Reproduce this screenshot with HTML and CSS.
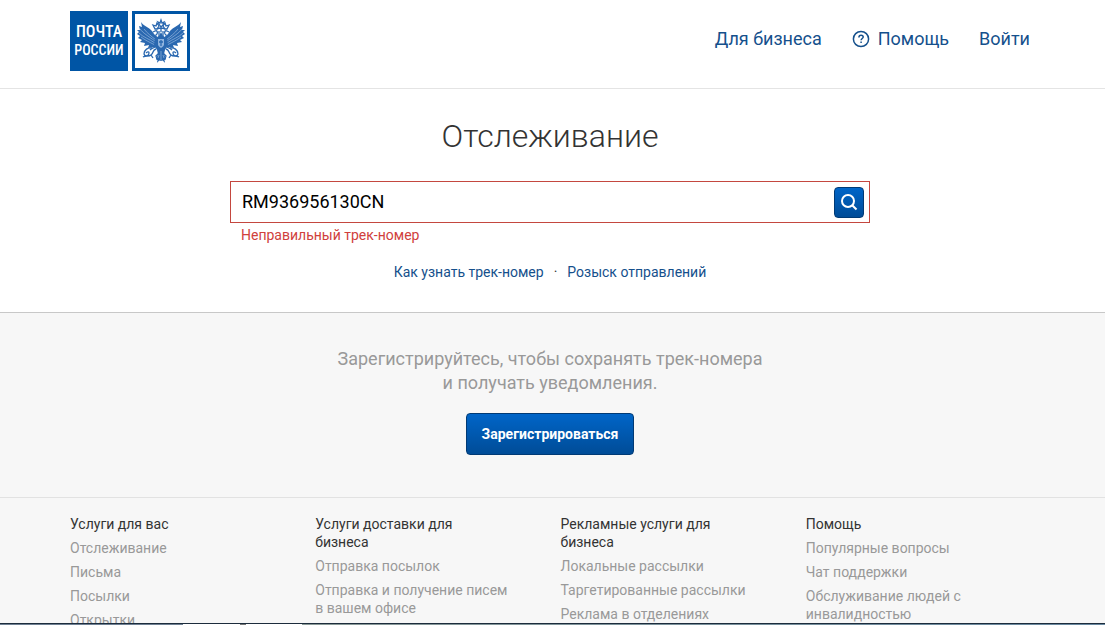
FILE: index.html
```
<!DOCTYPE html>
<html lang="ru">
<head>
<meta charset="utf-8">
<title>Отслеживание — Почта России</title>
<link rel="stylesheet" href="styles.css">
</head>
<body>
<header class="header">
  <a class="logo" href="#" aria-label="Почта России">
    <span class="logo-name"><span>ПОЧТА</span><span class="logo-second">РОССИИ</span></span>
    <span class="logo-emblem">
      <svg viewBox="0 0 52 54" width="52" height="54" aria-hidden="true">
        <defs>
          <g id="half">
            <path class="feather" d="M6 8 C8 12 14 13 17 17 C19 20 21 23 24 24 L24 33 L19 33 L13 34 L14 31 L9 32 L10 29 L5 28 L7 26 L3 24 L5 22 L2 20 L4 18 L2 16 L5 16 L4 12 L7 13Z"/>
            <path class="gap" d="M5 15 C8 19 13 22 20 27 M4 19 C8 23 14 25 20 29 M6 23 C10 26 14 28 20 31 M9 15 C12 19 16 22 21 26"/>
            <path class="line" d="M24 25 C20 23 20 21 22 20 C23 18 22 16 20 17 L18 18 M20 15 L18 11 L21 12 L22 9 L24 12 L22 15Z M24 17 L24 23"/>
            <path class="line" d="M23 32 C20 33 17 34 15 36 M17 34 C13 33 9 36 9 40 C10 43 14 42 14 39 C14 37 12 38 11 39 M21 35 C17 36 19 39 16 41 C14 43 11 41 8 43 M16 41 L18 44 M24 39 L21 42 L22 45 L24 43 L23 47 L26 44"/>
          </g>
        </defs>
        <use href="#half"/>
        <use href="#half" transform="translate(52 0) scale(-1 1)"/>
        <path class="body" d="M26 18 L28 22 L32 24 L33 31 L30 36 L29 40 L31 45 L26 47 L21 45 L23 40 L22 36 L19 31 L20 24 L24 22Z"/>
        <path class="shield" d="M23 25H29V31Q28 33 26 34Q24 33 23 31Z"/>
        <path class="line" d="M24 10 L23 8 L25 9 L26 6 L27 9 L29 8 L28 11 L26 13Z M26 13V18 M22 15Q26 13 30 15 M24 28L28 28 M26 26V32"/>
        <path class="gap" d="M26 37V46 M24 41L23 44 M28 41L29 44"/>
      </svg>
    </span>
  </a>
  <nav class="nav">
    <a href="#">Для бизнеса</a>
    <a class="help" href="#">
      <svg viewBox="0 0 18 18" width="18" height="18" aria-hidden="true">
        <circle cx="9" cy="9" r="7.6"/>
        <path d="M6.9 7.4C6.9 6 7.8 5.2 9.1 5.2C10.4 5.2 11.2 6 11.2 7C11.2 8.5 9.1 8.6 9.1 10.3M9.1 11.6V13"/>
      </svg>
      Помощь
    </a>
    <a href="#">Войти</a>
  </nav>
</header>

<main>
  <section class="tracking">
    <h1>Отслеживание</h1>
    <form class="search">
      <div class="field">
        <input id="track" type="text" value="RM936956130CN" aria-label="Трек-номер" aria-describedby="track-error">
        <button class="search-button" type="button" aria-label="Найти">
          <svg viewBox="0 0 18 18" width="18" height="18" aria-hidden="true">
            <circle cx="8" cy="8" r="6"/>
            <path d="M12.2 12.2L16.5 16.5"/>
          </svg>
        </button>
      </div>
      <p class="error" id="track-error">Неправильный трек-номер</p>
    </form>
    <p class="hints"><a href="#">Как узнать трек-номер</a><span>·</span><a href="#">Розыск отправлений</a></p>
  </section>

  <section class="register">
    <p>Зарегистрируйтесь, чтобы сохранять трек-номера<br>и получать уведомления.</p>
    <button class="register-button" type="button">Зарегистрироваться</button>
  </section>
</main>

<footer class="footer">
  <section>
    <h2>Услуги для вас</h2>
    <ul>
      <li><a href="#">Отслеживание</a></li>
      <li><a href="#">Письма</a></li>
      <li><a href="#">Посылки</a></li>
      <li><a href="#">Открытки</a></li>
    </ul>
  </section>
  <section>
    <h2>Услуги доставки для бизнеса</h2>
    <ul>
      <li><a href="#">Отправка посылок</a></li>
      <li><a href="#">Отправка и получение писем в вашем офисе</a></li>
    </ul>
  </section>
  <section>
    <h2>Рекламные услуги для бизнеса</h2>
    <ul>
      <li><a href="#">Локальные рассылки</a></li>
      <li><a href="#">Таргетированные рассылки</a></li>
      <li><a href="#">Реклама в отделениях</a></li>
    </ul>
  </section>
  <section>
    <h2>Помощь</h2>
    <ul>
      <li><a href="#">Популярные вопросы</a></li>
      <li><a href="#">Чат поддержки</a></li>
      <li><a href="#">Обслуживание людей с инвалидностью</a></li>
    </ul>
  </section>
</footer>
<div class="taskbar" aria-hidden="true"></div>
</body>
</html>
```
FILE: styles.css
```
* { box-sizing: border-box; }
body {
  height: 100vh;
  margin: 0;
  overflow: hidden;
  background: #fff;
  color: #333;
  font: 14px/18px Roboto, "Liberation Sans", sans-serif;
}
h1, h2, p, ul { margin: 0; padding: 0; font-weight: 400; }
ul { list-style: none; }
a { color: #15508c; text-decoration: none; }
button { font-family: inherit; padding: 0; cursor: pointer; }

.header {
  display: flex;
  justify-content: space-between;
  align-items: flex-start;
  padding: 11px 75px 17px 70px;
  border-bottom: 1px solid #e4e4e4;
}
.logo { display: flex; gap: 4px; }
.logo-name, .logo-emblem { width: 58px; height: 60px; }
.logo-name {
  display: flex;
  flex-direction: column;
  align-items: center;
  padding-top: 12px;
  background: #0055a5;
  color: #fff;
  font: 500 16px/18px "Roboto Condensed", "Liberation Sans Narrow", sans-serif;
}
.logo-second { font-size: 14px; }
.logo-emblem { border: 3px solid #0055a5; background: #fff; }
.logo-emblem svg { display: block; }
.feather, .body { fill: #2a68b0; }
.line { fill: none; stroke: #2a68b0; stroke-width: 1.3; }
.gap { fill: none; stroke: #a9c6e8; stroke-width: .6; }
.shield { fill: #8fb3dd; }

.nav {
  display: flex;
  gap: 30px;
  padding-top: 16px;
  font-size: 18px;
  line-height: 24px;
}
.help { display: flex; align-items: center; gap: 8px; }
.help svg { fill: none; stroke: #15508c; stroke-width: 1.5; }

.tracking { padding: 30px 75px 31px 70px; text-align: center; }
h1 { font-size: 32px; line-height: 34px; font-weight: 300; }
.search { max-width: 640px; margin: 28px auto 0; text-align: left; }
.field {
  display: flex;
  align-items: center;
  height: 42px;
  padding: 0 5px 0 11px;
  border: 1px solid #c4473f;
}
.field input {
  flex: 1;
  min-width: 0;
  padding: 0;
  border: 0;
  outline: 0;
  background: none;
  color: #000;
  font: 18px/24px Roboto, "Liberation Sans", sans-serif;
}
.search-button, .register-button {
  border: 1px solid #003a75;
  border-radius: 4px;
  background: linear-gradient(#0065c8, #004c97);
  color: #fff;
}
.search-button { display: grid; place-items: center; width: 30px; height: 31px; }
.search-button svg { fill: none; stroke: #fff; stroke-width: 2; }
.error { padding: 3px 11px 0; color: #d0403c; }
.hints { margin-top: 19px; }
.hints span { margin: 0 10px; }

.register {
  padding: 34px 75px 42px 70px;
  border-top: 1px solid #c8c8c8;
  background: #f7f7f7;
  text-align: center;
}
.register p { color: #999; font-size: 18px; line-height: 24px; }
.register-button {
  height: 42px;
  margin-top: 18px;
  padding: 0 15px;
  font-size: 14px;
  font-weight: 700;
}

.footer {
  display: grid;
  grid-template-columns: repeat(4, 1fr);
  gap: 22px;
  padding: 17px 76px 0 70px;
  border-top: 1px solid #e2e2e2;
  background: #f7f7f7;
}
.footer section { padding-right: 22px; }
.footer h2 { padding-right: 20px; font-size: 14px; line-height: 18px; }
.footer li { margin-top: 6px; }
.footer li a { color: #999; }
.taskbar {
  position: fixed;
  inset: auto 0 0;
  height: 2px;
  border-top: 1px solid #1c2c3c;
  background: linear-gradient(90deg, #6f8093 183px, #fff 183px 240px, #777 240px 246px, #fff 246px 302px, #8b9a98 302px, #6888a0);
}
```
